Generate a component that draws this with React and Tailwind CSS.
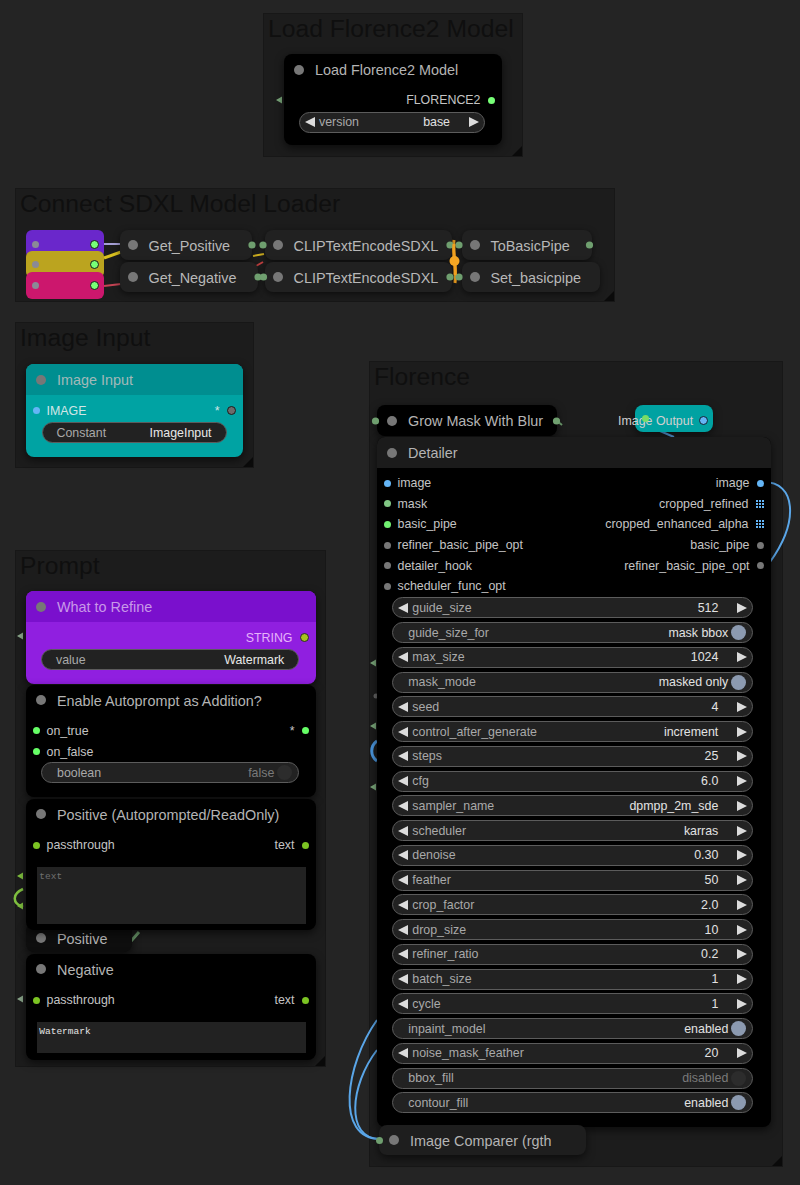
import React from "react";

function Tri({ dir }) {
  return dir === "l" ? (
    <svg width="10" height="10" viewBox="0 0 10 10" className="shrink-0">
      <polygon points="10,0 10,10 0,5" fill="#dcdcdc" />
    </svg>
  ) : (
    <svg width="10" height="10" viewBox="0 0 10 10" className="shrink-0">
      <polygon points="0,0 0,10 10,5" fill="#dcdcdc" />
    </svg>
  );
}

function NumW({ label, value }) {
  return (
    <div className="flex h-[21px] shrink-0 items-center rounded-full border border-[#5c5c5c] bg-[#222] px-[5px] text-[12.4px] leading-[16px]">
      <Tri dir="l" />
      <span className="ml-[4px] flex-1 whitespace-nowrap text-[#a9a9a9]">{label}</span>
      <span className="mr-[19px] whitespace-nowrap text-[#e2e2e2]">{value}</span>
      <Tri dir="r" />
    </div>
  );
}

function TogW({ label, value, on = true }) {
  return (
    <div className="flex h-[21px] shrink-0 items-center rounded-full border border-[#5c5c5c] bg-[#222] pl-[15px] pr-[6px] text-[12.4px] leading-[16px]">
      <span className="flex-1 whitespace-nowrap text-[#a9a9a9]">{label}</span>
      <span className={on ? "whitespace-nowrap text-[#e2e2e2]" : "whitespace-nowrap text-[#7a7a7a]"}>{value}</span>
      <span
        className={
          on
            ? "ml-[3px] h-[15px] w-[15px] shrink-0 rounded-full bg-[#8c9ab0]"
            : "ml-[3px] h-[15px] w-[15px] shrink-0 rounded-full bg-[#2c2c2c]"
        }
      />
    </div>
  );
}

function TextW({ label, value }) {
  return (
    <div className="flex h-[21px] items-center rounded-full border border-[#5c5c5c] bg-[#222] px-[14px] text-[12.4px] leading-[16px]">
      <span className="flex-1 text-[#a9a9a9]">{label}</span>
      <span className="text-[#e8e8e8]">{value}</span>
    </div>
  );
}

function Dot({ c }) {
  return <span className={"h-[7px] w-[7px] shrink-0 rounded-full " + c} />;
}

function GridIcon() {
  const cells = [];
  [0, 3, 6].forEach((x) =>
    [0, 3, 6].forEach((y) =>
      cells.push(<rect key={x + "-" + y} x={x} y={y} width="2" height="2" fill="#64b5f6" />)
    )
  );
  return (
    <svg width="8" height="8" viewBox="0 0 8 8" className="shrink-0">
      {cells}
    </svg>
  );
}

function Row({ left, lc, right, rc, rightIcon, labelCls = "text-[#c4c4c4]" }) {
  return (
    <div className={"flex h-[20.6px] items-center justify-between pl-[6.5px] pr-[7.5px] text-[12.4px] leading-[16px] " + labelCls}>
      <div className="flex items-center gap-[7px]">
        {left ? (
          <>
            <Dot c={lc} />
            <span className="whitespace-nowrap">{left}</span>
          </>
        ) : null}
      </div>
      <div className="flex items-center gap-[7px]">
        {right ? (
          <>
            <span className="whitespace-nowrap">{right}</span>
            {rightIcon || <Dot c={rc} />}
          </>
        ) : null}
      </div>
    </div>
  );
}

function Title({ text, cls = "text-[#b4b4b4]", bar = "" }) {
  return (
    <div className={"flex h-[31px] items-center gap-[11px] pl-[10px] text-[14.4px] leading-[18px] " + bar}>
      <span className="h-[10px] w-[10px] shrink-0 rounded-full bg-[#777]" />
      <span className={"pt-[1px] " + cls}>{text}</span>
    </div>
  );
}

function Group({ cls, title }) {
  return (
    <div className={"absolute border border-[#171717] bg-[#1c1c1c] " + cls}>
      <div className="pl-[4px] text-[24.7px] leading-[30px] text-[#0f0f0f]">{title}</div>
      <svg className="absolute bottom-0 right-0" width="10" height="10">
        <polygon points="10,0 10,10 0,10" fill="#0a0a0a" />
      </svg>
    </div>
  );
}

function Col({ cls, text }) {
  return (
    <div
      className={
        "absolute flex h-[30px] items-center gap-[10.5px] rounded-[8px] bg-[#212121] pl-[8px] text-[14.4px] leading-[18px] text-[#b8b8b8] shadow-[0_2px_6px_rgba(0,0,0,0.55)] " +
        cls
      }
    >
      <span className="h-[10px] w-[10px] shrink-0 rounded-full bg-[#777]" />
      <span className="pt-[1px]">{text}</span>
    </div>
  );
}

function Reroute({ cls }) {
  return (
    <div className={"absolute flex items-center justify-between rounded-[6px] pl-[6px] pr-[5.5px] " + cls}>
      <span className="h-[7px] w-[7px] rounded-full bg-[#8a8a96]" />
      <span className="h-[9px] w-[9px] rounded-full border-[1.5px] border-[#1a1a1a] bg-[#77ff77]" />
    </div>
  );
}

function Arrow({ x, y, c }) {
  return <polygon points={`${x},${y} ${x + 6},${y - 3.5} ${x + 6},${y + 3.5}`} fill={c} />;
}

export default function App() {
  return (
    <div className="relative h-[1185px] w-[800px] overflow-hidden bg-[#242424] font-['Liberation_Sans',Arial,sans-serif]">
      {/* groups */}
      <Group cls="left-[263px] top-[13px] h-[144px] w-[260px]" title="Load Florence2 Model" />
      <Group cls="left-[15px] top-[188px] h-[114px] w-[600px]" title="Connect SDXL Model Loader" />
      <Group cls="left-[15px] top-[322px] h-[146px] w-[239px]" title="Image Input" />
      <Group cls="left-[15px] top-[550px] h-[517px] w-[311px]" title="Prompt" />
      <Group cls="left-[369px] top-[361px] h-[806px] w-[414px]" title="Florence" />

      {/* links */}
      <svg className="absolute left-0 top-0" width="800" height="1185">
        <path d="M104 244 L121 244" stroke="#a59fd6" strokeWidth="2" fill="none" />
        <path d="M104 258 L121 252" stroke="#d8c020" strokeWidth="3" fill="none" />
        <path d="M104 286 L121 284" stroke="#c44454" strokeWidth="2" fill="none" />
        <path d="M253 256 L264 254" stroke="#d0b020" strokeWidth="2" fill="none" />
        <path d="M256 266 L263 262" stroke="#c04040" strokeWidth="2" fill="none" />
        <path d="M454 240 C452 255, 457 265, 455 283" stroke="#f0a020" strokeWidth="3" fill="none" />

        <path d="M764 482 C795 482, 800 520, 770 562" stroke="#5aa6e8" strokeWidth="2" fill="none" />
        <path d="M377 1020 C345 1065, 335 1139, 380 1139" stroke="#5aa6e8" strokeWidth="2" fill="none" />
        <path d="M377 1050 C350 1085, 345 1139, 380 1139" stroke="#5aa6e8" strokeWidth="2" fill="none" />
        <path d="M377 741 C370 746, 370 756, 377 761" stroke="#4a95dc" strokeWidth="3" fill="none" />
        <path d="M660 431 L674 437" stroke="#5aa6e8" strokeWidth="2" fill="none" />
        <Arrow x={370} y={663} c="#7aa77a" />
        <Arrow x={370} y={726} c="#7aa77a" />
        <Arrow x={370} y={787} c="#7aa77a" />
        <circle cx="376" cy="696" r="2.5" fill="#666" />
        <path d="M557 421 L562 425" stroke="#6f9f6f" strokeWidth="2" />

        <Arrow x={17} y={636} c="#8aa58a" />
        <Arrow x={17} y={876} c="#7fbf3f" />
        <path d="M23 889 C12 894, 12 903, 23 907" stroke="#7fbf3f" strokeWidth="2.5" fill="none" />
        <Arrow x={17} y={906} c="#7fbf3f" />
        <Arrow x={17} y={999} c="#8aa58a" />
        <path d="M128 937 L132 940 L139 932" stroke="#6f9f6f" strokeWidth="3" fill="none" />

        <Arrow x={276} y={100} c="#7aa77a" />
      </svg>

      {/* Load Florence2 Model node */}
      <div className="absolute left-[284px] top-[54px] w-[218px] rounded-[8px] bg-black shadow-[0_3px_8px_rgba(0,0,0,0.6)]">
        <Title text="Load Florence2 Model" />
        <div className="pb-[12px] pt-[5px]">
          <Row right="FLORENCE2" rc="bg-[#77ff77]" />
          <div className="mt-[1px] pl-[15px] pr-[17px]">
            <NumW label="version" value="base" />
          </div>
        </div>
      </div>

      {/* SDXL group nodes */}
      <Reroute cls="left-[26px] top-[230px] h-[28px] w-[78px] bg-[#6a27cb]" />
      <Reroute cls="left-[26px] top-[250.5px] h-[27px] w-[78px] bg-[#bba41f]" />
      <Reroute cls="left-[26px] top-[271.5px] h-[27px] w-[78px] bg-[#cc176d]" />
      <Col cls="left-[120px] top-[230px] w-[132px]" text="Get_Positive" />
      <Col cls="left-[120px] top-[262px] w-[138px]" text="Get_Negative" />
      <Col cls="left-[265px] top-[230px] w-[187px]" text="CLIPTextEncodeSDXL" />
      <Col cls="left-[265px] top-[262px] w-[187px]" text="CLIPTextEncodeSDXL" />
      <Col cls="left-[462px] top-[230px] w-[130px]" text="ToBasicPipe" />
      <Col cls="left-[462px] top-[262px] w-[138px]" text="Set_basicpipe" />
      <svg className="absolute left-0 top-0" width="800" height="300">
        <circle cx="252" cy="245" r="3.6" fill="#6f9f6f" />
        <circle cx="263" cy="245" r="3.6" fill="#6f9f6f" />
        <circle cx="258" cy="277" r="3.6" fill="#6f9f6f" />
        <circle cx="263.5" cy="277" r="3.6" fill="#6f9f6f" />
        <circle cx="450" cy="245" r="3.6" fill="#6f9f6f" />
        <circle cx="459" cy="245" r="3.6" fill="#6f9f6f" />
        <circle cx="450" cy="277" r="3.6" fill="#6f9f6f" />
        <circle cx="459" cy="277" r="3.6" fill="#6f9f6f" />
        <path d="M454 244 C453 255, 456 265, 455 275" stroke="#f0a020" strokeWidth="3" fill="none" />
        <circle cx="454.5" cy="261" r="5" fill="#f5a623" />
        <circle cx="589.5" cy="245" r="3.6" fill="#6f9f6f" />
      </svg>

      {/* Image Input node */}
      <div className="absolute left-[26px] top-[364px] w-[217px] overflow-hidden rounded-[8px] bg-[#00a3a3] shadow-[0_3px_8px_rgba(0,0,0,0.6)]">
        <Title text="Image Input" cls="text-[#a2b9b9]" bar="bg-[#008e90]" />
        <div className="pb-[14px] pt-[5.5px]">
          <Row
            left="IMAGE"
            lc="bg-[#64b5f6]"
            right="*"
            labelCls="text-[#d2e6e6]"
            rightIcon={<span className="h-[9px] w-[9px] shrink-0 rounded-full border-[1.5px] border-[#1b1b1b] bg-[#6c6c6c]" />}
          />
          <div className="mt-[1px] pl-[15.5px] pr-[16.5px]">
            <TextW label="Constant" value="ImageInput" />
          </div>
        </div>
      </div>

      {/* What to Refine */}
      <div className="absolute left-[26px] top-[591px] w-[290px] overflow-hidden rounded-[8px] bg-[#901fe0] shadow-[0_3px_8px_rgba(0,0,0,0.6)]">
        <Title text="What to Refine" cls="text-[#c898e8]" bar="bg-[#7a10cd]" />
        <div className="pb-[13.5px] pt-[5.5px]">
          <Row
            right="STRING"
            labelCls="text-[#e6b2fa]"
            rightIcon={<span className="h-[9px] w-[9px] shrink-0 rounded-full border-[1.5px] border-[#2a2a2a] bg-[#a6c41c]" />}
          />
          <div className="mt-[1px] pl-[15px] pr-[16.7px]">
            <TextW label="value" value="Watermark" />
          </div>
        </div>
      </div>

      {/* Enable Autoprompt */}
      <div className="absolute left-[26px] top-[684.5px] w-[290px] rounded-[8px] bg-black shadow-[0_3px_8px_rgba(0,0,0,0.6)]">
        <Title text="Enable Autoprompt as Addition?" />
        <div className="pb-[13.5px] pt-[5.2px]">
          <Row left="on_true" lc="bg-[#66ff66]" right="*" rc="bg-[#66ff66]" />
          <Row left="on_false" lc="bg-[#66ff66]" />
          <div className="mt-[0.5px] pl-[15px] pr-[16.7px]">
            <TogW label="boolean" value="false" on={false} />
          </div>
        </div>
      </div>

      {/* Positive collapsed (behind) */}
      <div className="absolute left-[26px] top-[923px] h-[29px] w-[106px] rounded-[8px] bg-[#0e0e0e] shadow-[0_3px_8px_rgba(0,0,0,0.6)]">
        <div className="flex h-[29px] items-center gap-[11px] pl-[10px] pt-[1px] text-[14.4px] leading-[18px]">
          <span className="h-[10px] w-[10px] shrink-0 rounded-full bg-[#777]" />
          <span className="pt-[1px] text-[#b4b4b4]">Positive</span>
        </div>
      </div>

      {/* Positive readonly */}
      <div className="absolute left-[26px] top-[798.5px] w-[290px] rounded-[8px] bg-black shadow-[0_3px_8px_rgba(0,0,0,0.6)]">
        <Title text="Positive (Autoprompted/ReadOnly)" />
        <div className="pb-[6px] pt-[5.5px]">
          <Row left="passthrough" lc="bg-[#7cc423]" right="text" rc="bg-[#7cc423]" />
          <div className="ml-[11.3px] mr-[10px] mt-[11px] h-[57px] bg-[#222] pl-[2px] pt-[4px] font-['Liberation_Mono',monospace] text-[9.5px] leading-[12px] text-[#6f6f6f]">
            text
          </div>
        </div>
      </div>

      {/* Negative */}
      <div className="absolute left-[26px] top-[953.5px] w-[290px] rounded-[8px] bg-black shadow-[0_3px_8px_rgba(0,0,0,0.6)]">
        <Title text="Negative" />
        <div className="pb-[7px] pt-[5.5px]">
          <Row left="passthrough" lc="bg-[#7cc423]" right="text" rc="bg-[#7cc423]" />
          <div className="ml-[11.3px] mr-[10px] mt-[11.7px] h-[31px] bg-[#222] pl-[2px] pt-[3.5px] font-['Liberation_Mono',monospace] text-[9.5px] leading-[12px] text-[#e4e4e4]">
            Watermark
          </div>
        </div>
      </div>

      {/* Grow Mask With Blur collapsed */}
      <div className="absolute left-[377px] top-[405px] flex h-[31px] w-[180px] items-center gap-[11px] rounded-[8px] bg-black pl-[10px] text-[14.4px] leading-[18px] shadow-[0_3px_8px_rgba(0,0,0,0.6)]">
        <span className="h-[10px] w-[10px] shrink-0 rounded-full bg-[#777]" />
        <span className="pt-[1px] text-[#b4b4b4]">Grow Mask With Blur</span>
      </div>
      <svg className="absolute left-[370px] top-[415px]" width="200" height="14">
        <circle cx="5.5" cy="6" r="3.6" fill="#6f9f6f" />
        <circle cx="186.5" cy="6" r="3.6" fill="#6f9f6f" />
      </svg>

      {/* Image Output collapsed */}
      <div className="absolute left-[635px] top-[405px] h-[27px] w-[78px] rounded-[8px] bg-[#00a2a2] shadow-[0_3px_8px_rgba(0,0,0,0.5)]" />
      <div className="absolute left-[618px] top-[413.5px] text-[12.4px] leading-[14px] text-[#d0d0d0]">Image Output</div>
      <span className="absolute left-[641.5px] top-[414.5px] h-[7px] w-[7px] rounded-full bg-[#77dd66]" />
      <span className="absolute left-[698.5px] top-[415.5px] h-[9px] w-[9px] rounded-full border-[1.5px] border-[#123] bg-[#64b5f6]" />

      {/* Detailer */}
      <div className="absolute left-[377px] top-[437px] w-[394px] rounded-[8px] bg-black shadow-[0_3px_8px_rgba(0,0,0,0.6)]">
        <Title text="Detailer" bar="rounded-t-[8px] bg-[#1b1b1b]" />
        <div className="pb-[14px] pt-[5px]">
          <Row left="image" lc="bg-[#64b5f6]" right="image" rc="bg-[#64b5f6]" />
          <Row left="mask" lc="bg-[#81c784]" right="cropped_refined" rightIcon={<GridIcon />} />
          <Row left="basic_pipe" lc="bg-[#70f070]" right="cropped_enhanced_alpha" rightIcon={<GridIcon />} />
          <Row left="refiner_basic_pipe_opt" lc="bg-[#777]" right="basic_pipe" rc="bg-[#777]" />
          <Row left="detailer_hook" lc="bg-[#777]" right="refiner_basic_pipe_opt" rc="bg-[#777]" />
          <Row left="scheduler_func_opt" lc="bg-[#777]" />
          <div className="mt-[0.7px] flex flex-col gap-[3.75px] pl-[15.3px] pr-[17.7px]">
            <NumW label="guide_size" value="512" />
            <TogW label="guide_size_for" value="mask bbox" />
            <NumW label="max_size" value="1024" />
            <TogW label="mask_mode" value="masked only" />
            <NumW label="seed" value="4" />
            <NumW label="control_after_generate" value="increment" />
            <NumW label="steps" value="25" />
            <NumW label="cfg" value="6.0" />
            <NumW label="sampler_name" value="dpmpp_2m_sde" />
            <NumW label="scheduler" value="karras" />
            <NumW label="denoise" value="0.30" />
            <NumW label="feather" value="50" />
            <NumW label="crop_factor" value="2.0" />
            <NumW label="drop_size" value="10" />
            <NumW label="refiner_ratio" value="0.2" />
            <NumW label="batch_size" value="1" />
            <NumW label="cycle" value="1" />
            <TogW label="inpaint_model" value="enabled" />
            <NumW label="noise_mask_feather" value="20" />
            <TogW label="bbox_fill" value="disabled" on={false} />
            <TogW label="contour_fill" value="enabled" />
          </div>
        </div>
      </div>

      {/* Image Comparer collapsed */}
      <div className="absolute left-[379px] top-[1125px] flex h-[30px] w-[207px] items-center gap-[11px] rounded-[8px] bg-[#1e1e1e] pl-[10px] text-[14.4px] leading-[18px] shadow-[0_3px_8px_rgba(0,0,0,0.6)]">
        <span className="h-[10px] w-[10px] shrink-0 rounded-full bg-[#777]" />
        <span className="pt-[1px] text-[#b4b4b4]">Image Comparer (rgth</span>
      </div>
      <span className="absolute left-[376px] top-[1136.5px] h-[7px] w-[7px] rounded-full bg-[#6f9f6f]" />
    </div>
  );
}
